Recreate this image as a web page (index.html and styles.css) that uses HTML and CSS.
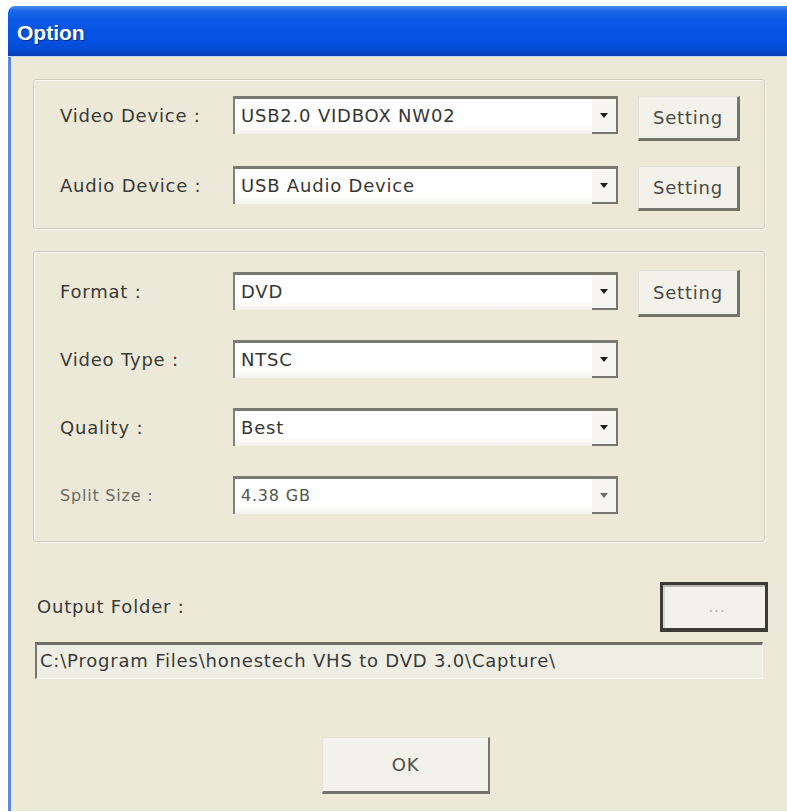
FILE: index.html
```html
<!DOCTYPE html>
<html>
<head>
<meta charset="utf-8">
<title>Option</title>
<link rel="stylesheet" href="styles.css">
</head>
<body>
<div class="window">
  <div class="titlebar"><span class="title">Option</span></div>
  <div class="client">
    <div class="group group-devices">
      <div class="row">
        <span class="label">Video Device :</span>
        <div class="combo"><span class="value">USB2.0 VIDBOX NW02</span><span class="arrow"><span class="tri"></span></span></div>
        <div class="btn btn-setting">Setting</div>
      </div>
      <div class="row">
        <span class="label">Audio Device :</span>
        <div class="combo"><span class="value">USB Audio Device</span><span class="arrow"><span class="tri"></span></span></div>
        <div class="btn btn-setting">Setting</div>
      </div>
    </div>

    <div class="group group-format">
      <div class="row">
        <span class="label">Format :</span>
        <div class="combo"><span class="value">DVD</span><span class="arrow"><span class="tri"></span></span></div>
        <div class="btn btn-setting btn-format">Setting</div>
      </div>
      <div class="row">
        <span class="label">Video Type :</span>
        <div class="combo"><span class="value">NTSC</span><span class="arrow"><span class="tri"></span></span></div>
      </div>
      <div class="row">
        <span class="label">Quality :</span>
        <div class="combo"><span class="value">Best</span><span class="arrow"><span class="tri"></span></span></div>
      </div>
      <div class="row">
        <span class="label label-faint">Split Size :</span>
        <div class="combo"><span class="value value-small">4.38 GB</span><span class="arrow"><span class="tri tri-faint"></span></span></div>
      </div>
    </div>

    <div class="output-row">
      <span class="label output-label">Output Folder :</span>
      <div class="btn btn-browse">...</div>
    </div>
    <div class="path-box">C:\Program Files\honestech VHS to DVD 3.0\Capture\</div>

    <div class="ok-row">
      <div class="btn btn-ok">OK</div>
    </div>
  </div>
</div>
</body>
</html>
```

FILE: styles.css
```css
html, body {
  margin: 0;
  padding: 0;
  background: #ffffff;
  overflow: hidden;
}

body {
  font-family: "DejaVu Sans", "Liberation Sans", sans-serif;
  font-size: 18px;
  letter-spacing: 0.8px;
  color: #363634;
}

.window {
  margin: 6px 0 0 8px;
  width: 779px;
}

.titlebar {
  height: 51px;
  box-sizing: border-box;
  padding: 3px 0 0 9px;
  display: flex;
  align-items: center;
  border-radius: 7px 0 0 0;
  background:
    linear-gradient(to bottom,
      #4a8cf0 0%,
      #1c66ea 10%,
      #0a58e4 30%,
      #0653e2 60%,
      #054cd8 85%,
      #0a3fb6 100%);
  border-bottom: 1px solid #c9d6ee;
}

.title {
  font-family: "Liberation Sans", "DejaVu Sans", sans-serif;
  font-weight: bold;
  font-size: 21px;
  letter-spacing: 0;
  color: #ffffff;
  text-shadow: 1px 1px 1px #0b2f8f;
}

.client {
  background: #ece9d8;
  border-left: 3px solid #5f89d8;
  padding: 22px 22px 17px 22px;
}

.group {
  border: 1px solid #d0cebe;
  border-radius: 3px;
  box-shadow: inset 1px 1px 0 #f8f7f0, 1px 1px 0 #f8f7f0;
  padding-left: 26px;
}

.group-devices {
  padding-top: 16px;
  padding-bottom: 24px;
  display: flex;
  flex-direction: column;
  gap: 32px;
}

.group-format {
  margin-top: 22px;
  padding-top: 20px;
  padding-bottom: 27px;
  display: flex;
  flex-direction: column;
  gap: 30px;
}

.row {
  display: flex;
  align-items: flex-start;
  height: 38px;
}

.label {
  width: 173px;
  line-height: 40px;
  color: #3a3a37;
  white-space: nowrap;
}

.label-faint {
  color: #6a6a64;
  font-size: 16px;
}

.combo {
  width: 385px;
  height: 38px;
  box-sizing: border-box;
  display: flex;
  background: linear-gradient(to bottom, #ffffff 0%, #ffffff 75%, #f3f2ec 100%);
  border-top: 3px solid #7a796f;
  border-left: 2px solid #838276;
}

.value {
  flex: 1;
  padding-left: 6px;
  line-height: 33px;
  color: #363634;
  white-space: nowrap;
}

.value-small {
  font-size: 16px;
  color: #55554f;
}

.arrow {
  width: 26px;
  box-sizing: border-box;
  background: #f6f5ef;
  border-right: 2px solid #77766c;
  border-bottom: 2px solid #77766c;
  display: flex;
  align-items: center;
  justify-content: center;
}

.tri {
  width: 0;
  height: 0;
  border-left: 4px solid transparent;
  border-right: 4px solid transparent;
  border-top: 5px solid #1e1e1c;
}

.tri-faint {
  border-top-color: #6a6a64;
}

.btn {
  box-sizing: border-box;
  display: flex;
  align-items: center;
  justify-content: center;
  background: #f3f2ea;
  color: #4a4a46;
}

.btn-setting {
  margin-left: 20px;
  width: 102px;
  height: 45px;
  border-top: 1px solid #e4e2d6;
  border-left: 1px solid #e4e2d6;
  border-right: 3px solid #75746a;
  border-bottom: 3px solid #75746a;
}

.btn-format {
  margin-top: -2px;
  height: 47px;
}

.output-row {
  margin-top: 40px;
  height: 50px;
  display: flex;
  align-items: center;
  justify-content: space-between;
}

.output-label {
  padding-left: 4px;
  width: auto;
}

.btn-browse {
  width: 108px;
  height: 50px;
  margin-right: -3px;
  border: 3px solid #3c3b34;
  border-bottom-width: 4px;
  box-shadow: inset 0 2px 0 #b9b8ac, inset 2px 0 0 #d8d7cc;
  color: #bdbcb2;
  font-size: 16px;
  padding-left: 6px;
}

.path-box {
  margin: 10px 2px 0 2px;
  height: 37px;
  box-sizing: border-box;
  background: #efeee5;
  border-top: 3px solid #6f6e64;
  border-left: 2px solid #7a786e;
  border-right: 1px solid #f6f5ef;
  border-bottom: 1px solid #f6f5ef;
  padding-left: 3px;
  line-height: 31px;
  color: #3a3a37;
  white-space: nowrap;
  overflow: hidden;
}

.ok-row {
  margin-top: 58px;
  padding-left: 289px;
  display: flex;
}

.btn-ok {
  width: 168px;
  height: 57px;
  border-top: 1px solid #e6e4d8;
  border-left: 1px solid #e6e4d8;
  border-right: 2px solid #75746a;
  border-bottom: 3px solid #75746a;
  color: #4e4e4a;
}
```
